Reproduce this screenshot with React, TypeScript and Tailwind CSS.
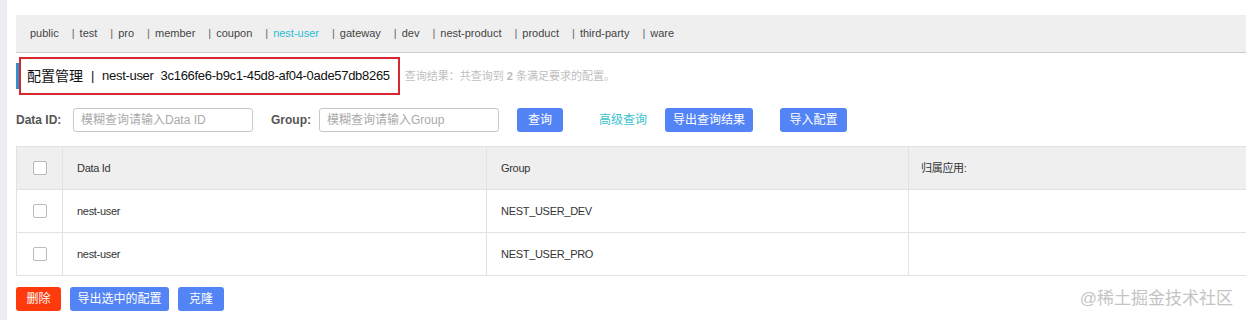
const tabs = [
  "public",
  "test",
  "pro",
  "member",
  "coupon",
  "nest-user",
  "gateway",
  "dev",
  "nest-product",
  "product",
  "third-party",
  "ware",
];

const rows = [
  { id: "nest-user", group: "NEST_USER_DEV" },
  { id: "nest-user", group: "NEST_USER_PRO" },
];

function Checkbox() {
  return <span className="block h-[14px] w-[14px] rounded-[2px] border border-[#bbbbbb] bg-white" />;
}

export default function App() {
  return (
    <div
      className="flex h-[320px] w-[1246px] overflow-hidden bg-white text-[#333]"
      style={{ fontFamily: '"Liberation Sans", "Noto Sans CJK SC", sans-serif' }}
    >
      {/* 左侧灰条 */}
      <div className="w-[7px] shrink-0 bg-[#eceef1]" />
      <div className="flex flex-1 flex-col pl-[9px] pt-[15px]">
        {/* 命名空间 tabs */}
        <div className="flex h-[38px] items-center border-b border-[#cccccc] bg-[#efefef] pl-[14px] text-[11px] text-[#444]">
          {tabs.map((t, i) => (
            <span key={t} className="flex items-center">
              {i > 0 && <span className="ml-[13px] mr-[5px] text-[#666]">|</span>}
              <span className={t === "nest-user" ? "text-[#2bbdd3]" : ""}>{t}</span>
            </span>
          ))}
        </div>

        {/* 标题 */}
        <div className="mt-[4px] flex h-[38px] items-center">
          <span className="h-[26px] w-[3px] bg-[#2f8fd0]" />
          <div className="flex h-[38px] items-center border-2 border-[#d9272e] pl-[6px] pr-[8px] text-[13px] tracking-[-0.3px] text-[#111]">
            <span className="text-[14px] tracking-normal">配置管理</span>
            <span className="mx-[8px]">|</span>
            <span>nest-user</span>
            <span className="ml-[7px]">3c166fe6-b9c1-45d8-af04-0ade57db8265</span>
          </div>
          <span className="ml-[5px] text-[11px] text-[#c0c0c0]">
            查询结果：共查询到 <b className="font-bold text-[#bbb]">2</b> 条满足要求的配置。
          </span>
        </div>

        {/* 搜索栏 */}
        <div className="mt-[13px] flex h-[24px] items-center text-[12px]">
          <span className="w-[57px] font-bold text-[#555]">Data ID:</span>
          <div className="flex h-[24px] w-[180px] items-center rounded-[3px] border border-[#c8c8c8] px-[7px] text-[#aaa]">
            模糊查询请输入Data ID
          </div>
          <span className="ml-[18px] w-[48px] font-bold text-[#555]">Group:</span>
          <div className="flex h-[24px] w-[180px] items-center rounded-[3px] border border-[#c8c8c8] px-[7px] text-[#aaa]">
            模糊查询请输入Group
          </div>
          <button className="ml-[18px] flex h-[24px] w-[46px] items-center justify-center rounded-[3px] bg-[#5384f5] text-white">
            查询
          </button>
          <span className="ml-[36px] text-[#36c2cf]">高级查询</span>
          <button className="ml-[18px] flex h-[24px] w-[88px] items-center justify-center rounded-[3px] bg-[#5384f5] text-white">
            导出查询结果
          </button>
          <button className="ml-[27px] flex h-[24px] w-[67px] items-center justify-center rounded-[3px] bg-[#5384f5] text-white">
            导入配置
          </button>
        </div>

        {/* 表格 */}
        <div className="mt-[14px] text-[11px] tracking-[-0.3px] text-[#333]">
          <div className="flex h-[44px] border-y border-l border-[#e2e2e2] bg-[#efeff0]">
            <div className="flex w-[46px] items-center justify-center border-r border-[#e2e2e2]">
              <Checkbox />
            </div>
            <div className="flex w-[424px] items-center border-r border-[#e2e2e2] pl-[14px]">Data Id</div>
            <div className="flex w-[422px] items-center border-r border-[#e2e2e2] pl-[14px]">Group</div>
            <div className="flex flex-1 items-center pl-[12px]">归属应用:</div>
          </div>
          {rows.map((r) => (
            <div key={r.group} className="flex h-[43px] border-b border-l border-[#e2e2e2] bg-white">
              <div className="flex w-[46px] items-center justify-center border-r border-[#e2e2e2]">
                <Checkbox />
              </div>
              <div className="flex w-[424px] items-center border-r border-[#e2e2e2] pl-[14px]">{r.id}</div>
              <div className="flex w-[422px] items-center border-r border-[#e2e2e2] pl-[14px]">{r.group}</div>
              <div className="flex-1" />
            </div>
          ))}
        </div>

        {/* 底部操作 */}
        <div className="mt-[11px] flex h-[24px] items-center text-[12px] text-white">
          <button className="flex h-[24px] w-[45px] items-center justify-center rounded-[3px] bg-[#ff3a0c]">删除</button>
          <button className="ml-[9px] flex h-[24px] w-[99px] items-center justify-center rounded-[3px] bg-[#5384f5]">
            导出选中的配置
          </button>
          <button className="ml-[9px] flex h-[24px] w-[46px] items-center justify-center rounded-[3px] bg-[#5384f5]">
            克隆
          </button>
          <span className="ml-auto mr-[13px] text-[17px] text-[#c4c4c4]">@稀土掘金技术社区</span>
        </div>
      </div>
    </div>
  );
}
